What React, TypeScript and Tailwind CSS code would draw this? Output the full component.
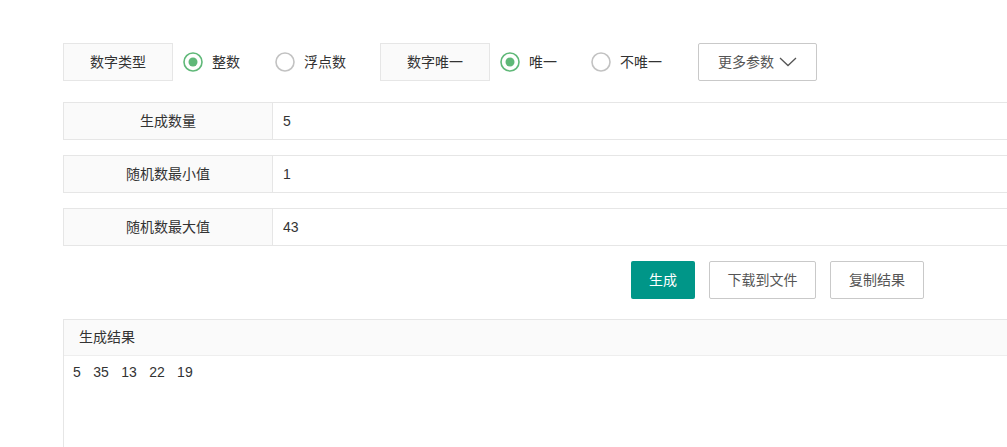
import React from "react";

const font = { fontFamily: '"Liberation Sans", "Noto Sans CJK SC", sans-serif' };

function Radio({ checked, label }: { checked: boolean; label: string }) {
  return (
    <div className="flex items-center h-[38px]">
      <svg width="20" height="20" viewBox="0 0 20 20" className="shrink-0">
        <circle cx="10" cy="10" r="9" fill="none" stroke={checked ? "#5FB878" : "#c2c2c2"} strokeWidth="1.6" />
        {checked && <circle cx="10" cy="10" r="4.5" fill="#5FB878" />}
      </svg>
      <span className="ml-[9px] text-[14px] text-[#333]">{label}</span>
    </div>
  );
}

function Row({ label, value }: { label: string; value: string }) {
  return (
    <div className="flex h-[38px] border border-[#e6e6e6] border-r-0">
      <div className="w-[209px] shrink-0 bg-[#fafafa] border-r border-[#e6e6e6] flex items-center justify-center text-[14px] text-[#333]">
        {label}
      </div>
      <div className="flex-1 bg-white flex items-center pl-[10px] text-[14px] text-[#333]">{value}</div>
    </div>
  );
}

export default function App() {
  return (
    <div className="w-[1007px] h-[447px] overflow-hidden bg-white" style={font}>
      <div className="pl-[63px] pt-[43px] w-[1100px]">
        <div className="flex items-center h-[38px]">
          <div className="w-[110px] h-[38px] bg-[#fafafa] border border-[#e6e6e6] flex items-center justify-center text-[14px] text-[#333]">
            数字类型
          </div>
          <div className="ml-[10px]"><Radio checked label="整数" /></div>
          <div className="ml-[35px]"><Radio checked={false} label="浮点数" /></div>
          <div className="ml-[34px] w-[110px] h-[38px] bg-[#fafafa] border border-[#e6e6e6] flex items-center justify-center text-[14px] text-[#333]">
            数字唯一
          </div>
          <div className="ml-[10px]"><Radio checked label="唯一" /></div>
          <div className="ml-[34px]"><Radio checked={false} label="不唯一" /></div>
          <div className="ml-[36px] w-[119px] h-[38px] border border-[#c9c9c9] bg-white flex items-center justify-center text-[14px] text-[#555] rounded-[2px]">
            更多参数
            <svg width="18" height="10" viewBox="0 0 18 10" className="ml-[5px]">
              <path d="M1 1 L9 8.5 L17 1" fill="none" stroke="#555" strokeWidth="1.3" />
            </svg>
          </div>
        </div>

        <div className="mt-[21px] flex flex-col gap-[15px]">
          <Row label="生成数量" value="5" />
          <Row label="随机数最小值" value="1" />
          <Row label="随机数最大值" value="43" />
        </div>

        <div className="mt-[15px] flex pl-[568px] gap-[14px]">
          <button className="h-[38px] px-[18px] bg-[#009688] text-white text-[14px] rounded-[2px]">生成</button>
          <button className="h-[38px] w-[107px] border border-[#c9c9c9] bg-white text-[#555] text-[14px] rounded-[2px]">下载到文件</button>
          <button className="h-[38px] w-[94px] border border-[#c9c9c9] bg-white text-[#555] text-[14px] rounded-[2px]">复制结果</button>
        </div>

        <div className="mt-[20px] border border-[#e6e6e6] border-r-0 h-[200px]">
          <div className="h-[36px] bg-[#fafafa] border-b border-[#eee] flex items-center pl-[15px] text-[14px] text-[#333]">
            生成结果
          </div>
          <div className="pl-[9px] pt-[6px] flex gap-[12.4px] text-[14px] text-[#333] leading-[20px]">
            <span>5</span>
            <span>35</span>
            <span>13</span>
            <span>22</span>
            <span>19</span>
          </div>
        </div>
      </div>
    </div>
  );
}
